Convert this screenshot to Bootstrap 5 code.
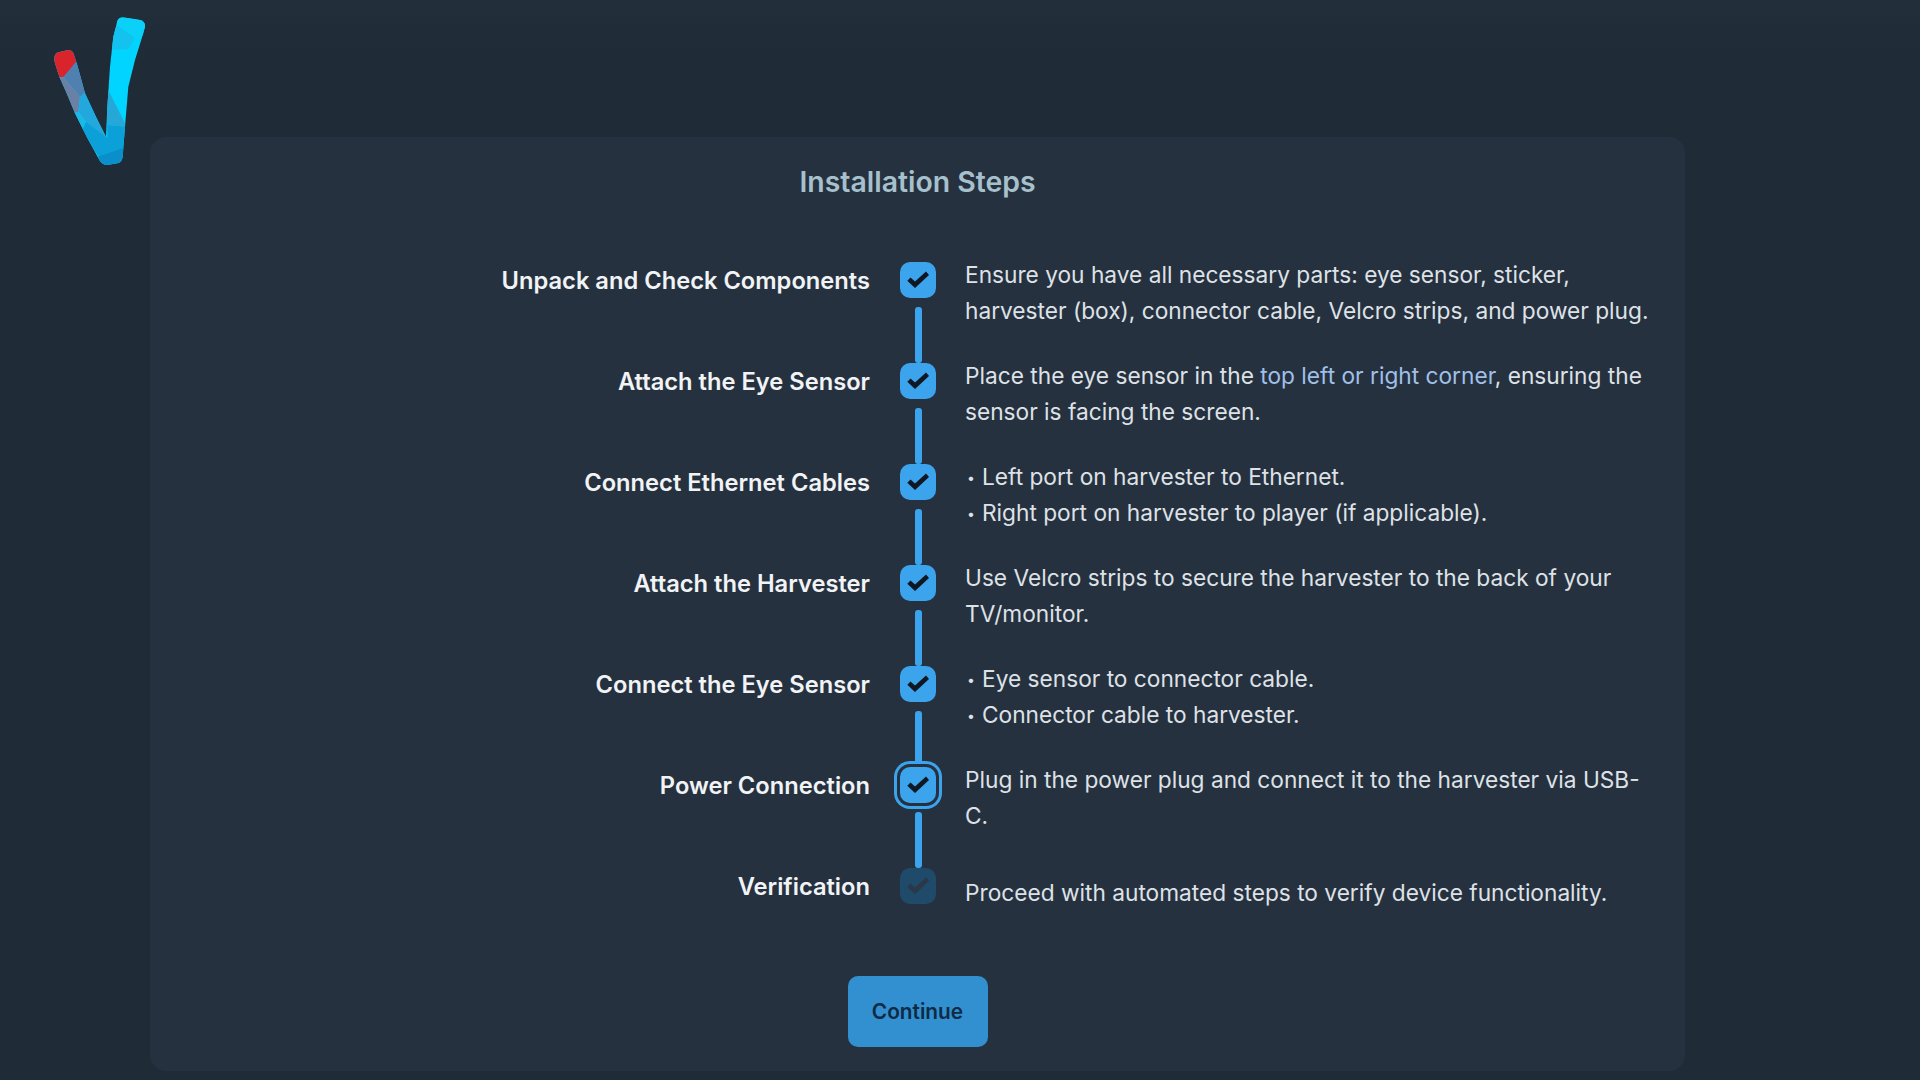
<!DOCTYPE html>
<html lang="en">

<head>
    <meta charset="UTF-8" />
    <title>Installation Steps</title>
    <link href="https://cdn.jsdelivr.net/npm/bootstrap@5.3.3/dist/css/bootstrap.min.css" rel="stylesheet">
    <style>
        body {
            background: linear-gradient(#232e3b, #202b38 60px);
            font-family: Inter, "Liberation Sans", sans-serif;
            height: 1080px;
            overflow: hidden;
        }

        .logo-col {
            width: 150px;
            flex: none;
        }

        .logo-col svg {
            display: block;
        }

        .setup-panel {
            width: 1535px;
            height: 934px;
            margin-top: 137px;
            background: #263140;
            border-radius: 16px;
            padding: 0 24px;
        }

        .panel-title {
            color: #a6c0cc;
            font-size: 28.4px;
            font-weight: 600;
            line-height: 34px;
            margin: 28px 0 63px;
            text-align: center;
        }

        .step-row {
            height: 101px;
        }

        .step-row-last {
            height: 36px;
        }

        .step-name {
            flex: 1 1 0;
            min-width: 0;
            padding-top: 1px;
            padding-right: 30px;
            text-align: right;
            color: #f1f3f5;
            font-size: 23.7px;
            font-weight: 600;
            line-height: 36px;
        }

        .step-mid {
            width: 36px;
            flex: none;
        }

        .step-box {
            width: 36px;
            height: 36px;
            flex: none;
            border-radius: 10px;
            background: #3ba4ec;
            color: #0f1722;
        }

        .step-box-now {
            box-shadow: 0 0 0 3px #263140, 0 0 0 6px #3ba4ec;
        }

        .step-box-todo {
            background: #1f4a69;
            color: #2a3848;
        }

        .step-line {
            width: 7px;
            height: 56px;
            margin-top: 9px;
            border-radius: 3px;
            background: #3ba4ec;
        }

        .step-note {
            flex: 1 1 0;
            min-width: 0;
            padding-left: 29px;
            margin-top: -5px;
            color: #dee2e6;
            font-size: 22.7px;
            line-height: 35.5px;
        }

        .step-note-single {
            margin-top: 7px;
        }

        .step-note a {
            color: #a0c0e8;
            text-decoration: none;
        }

        .note-dot {
            display: inline-block;
            width: 17px;
            padding-right: 5px;
            font-size: 14px;
            line-height: 1;
            text-align: center;
            vertical-align: 2px;
        }

        .continue-btn {
            width: 140px;
            height: 71px;
            margin-top: 72px;
            padding: 0;
            border: 0;
            border-radius: 10px;
            background: #3290d0;
            color: #0f2a44;
            font-size: 20.8px;
            font-weight: 600;
        }
    </style>
</head>

<body>

    <div class="d-flex">
        <div class="logo-col">
            <svg width="150" height="190" viewBox="0 0 450 570">
                <defs>
                    <clipPath id="logoClip">
                        <path d="M350 72 Q352 52 368 52 L420 60 Q436 64 435 80 L428 106 L405 180 L385 260 L375 380 L368 470 Q366 488 352 490 L322 495 Q306 495 298 480 L260 410 L225 340 L200 280 L178 230 L165 190 Q158 162 175 157 L205 150 Q218 150 222 165 L232 195 L255 280 L290 355 L318 410 L322 320 L330 200 L340 110 Z" />
                    </clipPath>
                </defs>
                <g clip-path="url(#logoClip)">
                    <rect width="450" height="570" fill="#00d4ff" />
                    <polygon points="345,40 445,40 445,100 405,115 350,75" fill="#0bd0f8" />
                    <polygon points="350,75 405,115 385,148 330,150 335,100" fill="#14c2f0" />
                    <polygon points="325,270 380,380 322,375 318,330" fill="#25a8d8" />
                    <polygon points="150,140 235,140 228,190 190,232 170,230" fill="#d9242c" />
                    <polygon points="228,185 260,280 240,290 190,232" fill="#5080b0" />
                    <polygon points="170,230 190,232 240,290 235,335 220,345" fill="#6a80a5" />
                    <polygon points="240,290 255,275 325,420 258,365 235,335" fill="#22a8dc" />
                    <polygon points="215,340 235,335 258,365 245,395" fill="#1cb8e8" />
                    <polygon points="258,365 322,415 322,375 380,380 370,445 295,468 245,395" fill="#0ba0d8" />
                    <polygon points="295,468 372,443 372,500 295,500" fill="#0a8fcb" />
                </g>
            </svg>
        </div>

        <div class="setup-panel d-flex flex-column align-items-center">
            <h1 class="panel-title">Installation Steps</h1>

            <div class="w-100">
                <div class="step-row d-flex">
                    <div class="step-name">Unpack and Check Components</div>
                    <div class="step-mid d-flex flex-column align-items-center">
                        <div class="step-box d-flex align-items-center justify-content-center">
                            <svg width="36" height="36" viewBox="0 0 36 36" fill="currentColor"><polygon points="7.3,18.7 10.5,15.5 15,19.5 26,9.5 29,13 15,26" /></svg>
                        </div>
                        <div class="step-line"></div>
                    </div>
                    <div class="step-note">Ensure you have all necessary parts: eye sensor, sticker, harvester (box), connector cable, Velcro strips, and power plug.</div>
                </div>

                <div class="step-row d-flex">
                    <div class="step-name">Attach the Eye Sensor</div>
                    <div class="step-mid d-flex flex-column align-items-center">
                        <div class="step-box d-flex align-items-center justify-content-center">
                            <svg width="36" height="36" viewBox="0 0 36 36" fill="currentColor"><polygon points="7.3,18.7 10.5,15.5 15,19.5 26,9.5 29,13 15,26" /></svg>
                        </div>
                        <div class="step-line"></div>
                    </div>
                    <div class="step-note">Place the eye sensor in the <a href="#">top left or right corner</a>, ensuring the sensor is facing the screen.</div>
                </div>

                <div class="step-row d-flex">
                    <div class="step-name">Connect Ethernet Cables</div>
                    <div class="step-mid d-flex flex-column align-items-center">
                        <div class="step-box d-flex align-items-center justify-content-center">
                            <svg width="36" height="36" viewBox="0 0 36 36" fill="currentColor"><polygon points="7.3,18.7 10.5,15.5 15,19.5 26,9.5 29,13 15,26" /></svg>
                        </div>
                        <div class="step-line"></div>
                    </div>
                    <div class="step-note"><span class="note-dot">•</span>Left port on harvester to Ethernet.<br><span class="note-dot">•</span>Right port on harvester to player (if applicable).</div>
                </div>

                <div class="step-row d-flex">
                    <div class="step-name">Attach the Harvester</div>
                    <div class="step-mid d-flex flex-column align-items-center">
                        <div class="step-box d-flex align-items-center justify-content-center">
                            <svg width="36" height="36" viewBox="0 0 36 36" fill="currentColor"><polygon points="7.3,18.7 10.5,15.5 15,19.5 26,9.5 29,13 15,26" /></svg>
                        </div>
                        <div class="step-line"></div>
                    </div>
                    <div class="step-note">Use Velcro strips to secure the harvester to the back of your TV/monitor.</div>
                </div>

                <div class="step-row d-flex">
                    <div class="step-name">Connect the Eye Sensor</div>
                    <div class="step-mid d-flex flex-column align-items-center">
                        <div class="step-box d-flex align-items-center justify-content-center">
                            <svg width="36" height="36" viewBox="0 0 36 36" fill="currentColor"><polygon points="7.3,18.7 10.5,15.5 15,19.5 26,9.5 29,13 15,26" /></svg>
                        </div>
                        <div class="step-line"></div>
                    </div>
                    <div class="step-note"><span class="note-dot">•</span>Eye sensor to connector cable.<br><span class="note-dot">•</span>Connector cable to harvester.</div>
                </div>

                <div class="step-row d-flex">
                    <div class="step-name">Power Connection</div>
                    <div class="step-mid d-flex flex-column align-items-center">
                        <div class="step-box step-box-now d-flex align-items-center justify-content-center">
                            <svg width="36" height="36" viewBox="0 0 36 36" fill="currentColor"><polygon points="7.3,18.7 10.5,15.5 15,19.5 26,9.5 29,13 15,26" /></svg>
                        </div>
                        <div class="step-line"></div>
                    </div>
                    <div class="step-note">Plug in the power plug and connect it to the harvester via USB-C.</div>
                </div>

                <div class="step-row step-row-last d-flex">
                    <div class="step-name">Verification</div>
                    <div class="step-mid d-flex flex-column align-items-center">
                        <div class="step-box step-box-todo d-flex align-items-center justify-content-center">
                            <svg width="36" height="36" viewBox="0 0 36 36" fill="currentColor"><polygon points="7.3,18.7 10.5,15.5 15,19.5 26,9.5 29,13 15,26" /></svg>
                        </div>
                    </div>
                    <div class="step-note step-note-single">Proceed with automated steps to verify device functionality.</div>
                </div>
            </div>

            <button type="button" class="btn continue-btn">Continue</button>
        </div>
    </div>

    <script src="https://cdn.jsdelivr.net/npm/bootstrap@5.3.3/dist/js/bootstrap.bundle.min.js"></script>
</body>

</html>
